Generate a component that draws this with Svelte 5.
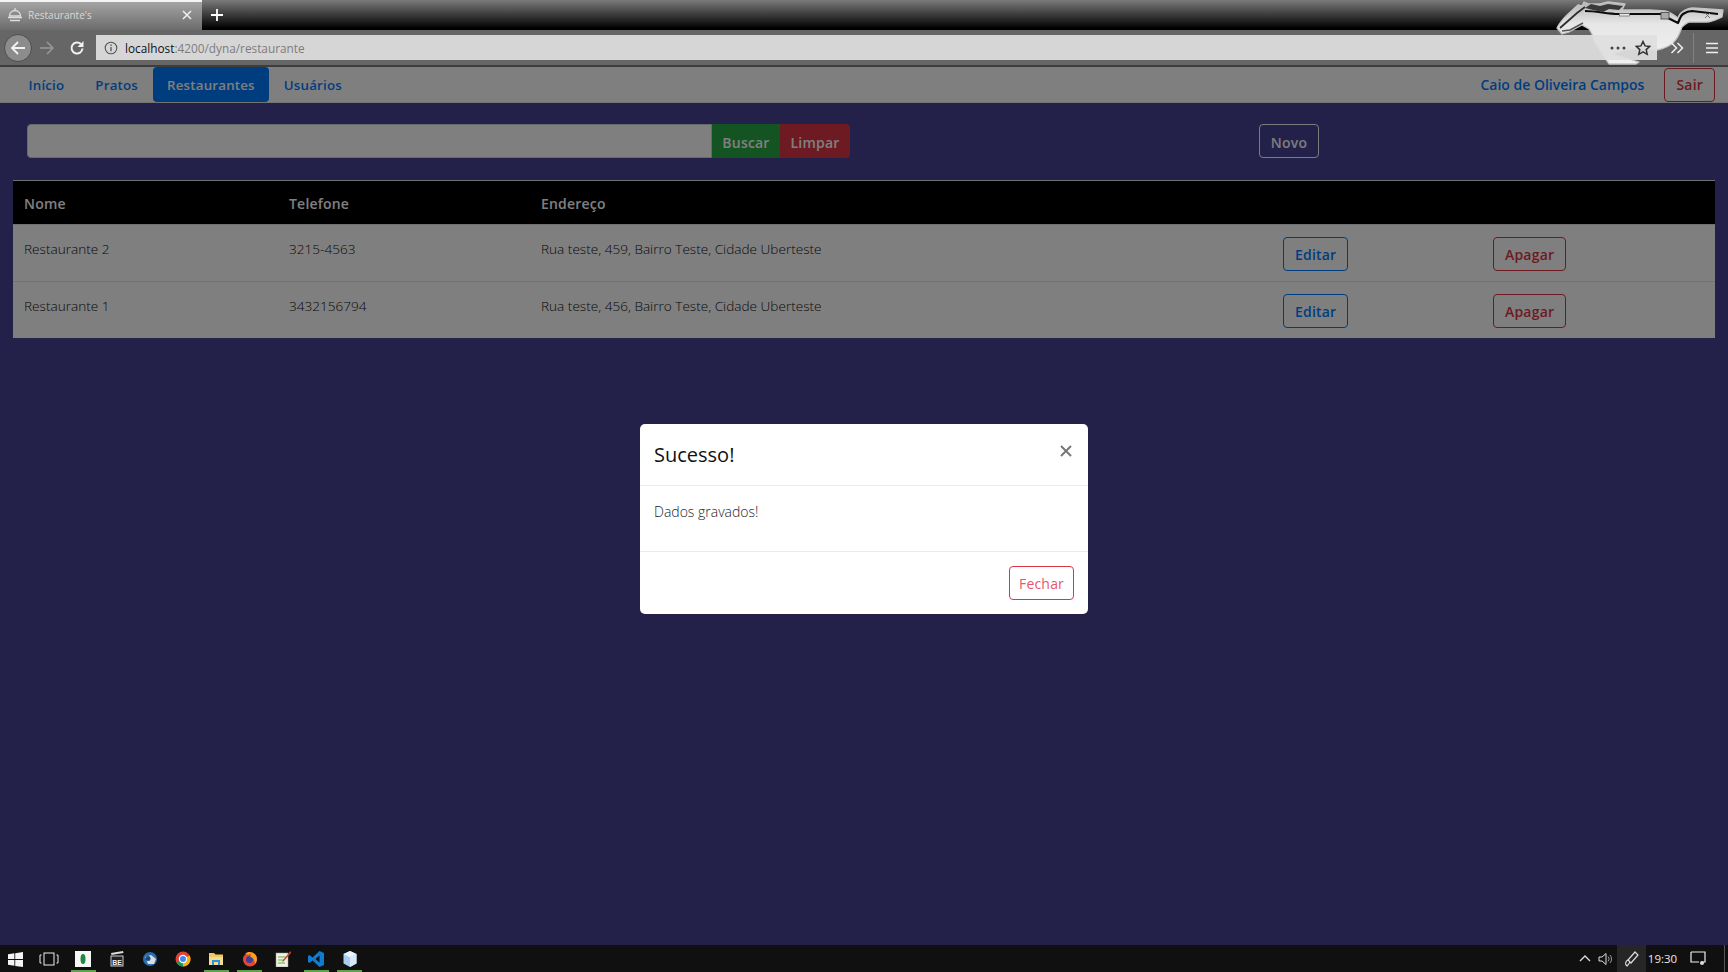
<script>
  const tabs = [
    { label: "Início" },
    { label: "Pratos" },
    { label: "Restaurantes", active: true },
    { label: "Usuários" }
  ];
  const rows = [
    { nome: "Restaurante 2", telefone: "3215-4563", endereco: "Rua teste, 459, Bairro Teste, Cidade Uberteste" },
    { nome: "Restaurante 1", telefone: "3432156794", endereco: "Rua teste, 456, Bairro Teste, Cidade Uberteste" }
  ];
</script>

<div class="screen">
  <div class="tabstrip">
    <div class="tab">
      <svg class="favicon" viewBox="0 0 16 16" width="16" height="16">
        <path d="M8 1v2M2.500 9a5.500 5.500 0 0 1 11 0z" fill="none" stroke="#ddd" stroke-width="1.300" />
        <path d="M1 10.500h14M3 13.500h10" stroke="#ddd" stroke-width="1.500" />
      </svg>
      <span class="tab-title">Restaurante's</span>
      <svg class="tab-close" viewBox="0 0 10 10" width="10" height="10">
        <path d="M1 1l8 8M9 1l-8 8" stroke="#eee" stroke-width="1.600" />
      </svg>
    </div>
    <svg class="new-tab" viewBox="0 0 12 12" width="12" height="12">
      <path d="M6 0v12M0 6h12" stroke="#fff" stroke-width="1.800" />
    </svg>
  </div>

  <div class="toolbar">
    <div class="back">
      <svg viewBox="0 0 16 16" width="16" height="16">
        <path d="M15 8H2M8 2L2 8l6 6" fill="none" stroke="#f2f2f2" stroke-width="1.800" />
      </svg>
    </div>
    <svg class="forward" viewBox="0 0 16 16" width="16" height="16">
      <path d="M1 8h13M8 2l6 6-6 6" fill="none" stroke="#999" stroke-width="1.500" />
    </svg>
    <svg class="reload" viewBox="0 0 16 16" width="16" height="16">
      <path d="M13.500 8.500a5.500 5.500 0 1 1-1.700-4.500" fill="none" stroke="#f2f2f2" stroke-width="2" />
      <path d="M14.500 1v6h-6z" fill="#f2f2f2" />
    </svg>
    <div class="urlbar">
      <svg class="info" viewBox="0 0 14 14" width="14" height="14">
        <circle cx="7" cy="7" r="5.800" fill="none" stroke="#555" stroke-width="1.100" />
        <path d="M7 6v4.200M7 3.600v1.300" stroke="#555" stroke-width="1.300" />
      </svg>
      <span class="host">localhost</span><span class="path">:4200/dyna/restaurante</span>
      <span class="url-actions">
        <svg viewBox="0 0 16 4" width="16" height="4">
          <circle cx="2" cy="2" r="1.500" fill="#444" /><circle cx="8" cy="2" r="1.500" fill="#444" /><circle cx="14" cy="2" r="1.500" fill="#444" />
        </svg>
        <svg viewBox="0 0 16 16" width="16" height="16">
          <path d="M8 1.500l2 4.400 4.800.5-3.600 3.200 1 4.700L8 11.900l-4.200 2.400 1-4.700L1.200 6.400 6 5.900z" fill="none" stroke="#333" stroke-width="1.500" />
        </svg>
      </span>
    </div>
    <svg class="overflow" viewBox="0 0 14 12" width="14" height="12">
      <path d="M1.500 1l5 5-5 5M7.500 1l5 5-5 5" fill="none" stroke="#f0f0f0" stroke-width="1.500" />
    </svg>
    <span class="tool-sep"></span>
    <svg class="burger" viewBox="0 0 12 12" width="12" height="12">
      <path d="M0 1.500h12M0 6h12M0 10.500h12" stroke="#f0f0f0" stroke-width="1.600" />
    </svg>
  </div>

  <!-- tema do firefox, passa por baixo da barra de endereco -->
  <svg class="mustang" viewBox="0 0 178 68" width="178" height="68">
    <defs>
      <linearGradient id="pelo" x1="0" y1="0" x2="0" y2="1">
        <stop offset="0" stop-color="#b4b4b4" />
        <stop offset="0.35" stop-color="#e6e6e6" />
        <stop offset="1" stop-color="#f2f2f2" />
      </linearGradient>
    </defs>
    <path d="M7 28C10 22 14 18 17 15L28 5l4 1 2-4 5 2 11 0 8-2 17 2-3 6 28 0 15 1c5 1 9 4 13 7 1-3 2-5 4-6 3-2 7-4 11-4l30 2-1 7c-5 2-10 5-15 5l-17 0c-3 0-6 3-8 5-2 6-4 11-9 16-5 4-11 6-16 7l-17-2-15 2-13 4 27 8-3 2-27 0-8-12-7-11-2-7-3-5-7-4-13 7-7 2z"
      fill="url(#pelo)" stroke="#c4c4c4" stroke-width="1.300" stroke-linejoin="round" />
    <path d="M35 11c12 0 22 3 34 3h42l5 3 12 6c2-4 2-7 5-9 3-2 7-3 9-3l26 3" fill="none" stroke="#0c0c0c" stroke-width="2.200" stroke-linejoin="round" />
    <path d="M10 28l17-15 8-6" fill="none" stroke="#2e2e2e" stroke-width="1.800" />
    <path d="M35 8l6-4 9 2 8-2 15 2-4 4-10-1-6 3-10-2z" fill="#3a3a3a" />
    <path d="M33 23l-13 7-8 1" fill="none" stroke="#555" stroke-width="1.500" />
    <rect x="69.500" y="13.500" width="10" height="2.500" fill="#e8e8e8" stroke="#666" stroke-width="0.700" />
    <rect x="111" y="12.500" width="8" height="6.500" fill="#aaa" stroke="#444" stroke-width="0.800" />
    <path d="M155 13l5 5M160 13l-5 5" stroke="#777" />
  </svg>

  <main class="page">
    <nav class="navbar">
      {#each tabs as tab}
        <a class="nav-link" class:active={tab.active} href="#top">{tab.label}</a>
      {/each}
      <span class="user">Caio de Oliveira Campos</span>
      <button class="btn outline-danger sair">Sair</button>
    </nav>

    <div class="search-row">
      <div class="search">
        <input type="text" />
        <button class="btn buscar">Buscar</button>
        <button class="btn limpar">Limpar</button>
      </div>
      <button class="btn novo">Novo</button>
    </div>

    <table>
      <thead>
        <tr>
          <th class="col-nome">Nome</th>
          <th class="col-tel">Telefone</th>
          <th class="col-end">Endereço</th>
          <th class="col-edit"></th>
          <th></th>
        </tr>
      </thead>
      <tbody>
        {#each rows as row}
          <tr>
            <td>{row.nome}</td>
            <td>{row.telefone}</td>
            <td>{row.endereco}</td>
            <td><button class="btn outline-primary">Editar</button></td>
            <td><button class="btn outline-danger">Apagar</button></td>
          </tr>
        {/each}
      </tbody>
    </table>

    <div class="backdrop"></div>

    <div class="modal">
      <header>
        <h4>Sucesso!</h4>
        <svg class="close" viewBox="0 0 12 12" width="12" height="12">
          <path d="M1 1l10 10M11 1L1 11" stroke="#777" stroke-width="2" />
        </svg>
      </header>
      <div class="modal-body">Dados gravados!</div>
      <footer>
        <button class="btn fechar">Fechar</button>
      </footer>
    </div>
  </main>

  <div class="taskbar">
    <div class="task first">
      <svg viewBox="0 0 16 16" width="15" height="15">
        <path d="M0 2.300l6.800-1v6.200H0zM7.700 1.200L16 0v7.500H7.700zM0 8.400h6.800v6.300l-6.800-1zM7.700 8.400H16V16l-8.300-1.200z" fill="#f4f4f4" />
      </svg>
    </div>
    <div class="task first">
      <svg viewBox="0 0 20 14" width="20" height="14">
        <rect x="5" y="1" width="10" height="12" fill="none" stroke="#eee" />
        <path d="M2.500 3H1v8h1.500M17.500 3H19v8h-1.500" fill="none" stroke="#eee" />
      </svg>
    </div>
    <div class="task running">
      <svg viewBox="0 0 16 16" width="16" height="16">
        <rect width="16" height="16" fill="#f7f7f7" />
        <ellipse cx="8" cy="8" rx="2.500" ry="5" fill="#1f8a3c" />
      </svg>
    </div>
    <div class="task">
      <svg viewBox="0 0 16 16" width="16" height="16">
        <path d="M2 2l12-2 .5 2-12 2z" fill="#ddd" />
        <rect x="2" y="5" width="12" height="10" fill="#222" stroke="#ccc" />
        <text x="8" y="13.500" class="clap">BE</text>
      </svg>
    </div>
    <div class="task">
      <svg viewBox="0 0 16 16" width="16" height="16">
        <circle cx="8" cy="8" r="7" fill="#2a6eb0" />
        <path d="M3 6l6-2 5 4-2 5-6 0z" fill="#d8dde3" />
        <circle cx="6" cy="7.500" r="2.500" fill="#174a80" />
      </svg>
    </div>
    <div class="task">
      <svg viewBox="0 0 16 16" width="16" height="16">
        <circle cx="8" cy="8" r="7.500" fill="#db4437" />
        <path d="M8 8L1.500 11.800A7.500 7.500 0 0 0 8 15.500z" fill="#0f9d58" />
        <path d="M8 8l6.700-3.400A7.500 7.500 0 0 1 8 15.500z" fill="#f4b400" />
        <circle cx="8" cy="8" r="3.600" fill="#4285f4" stroke="#fff" stroke-width="1.200" />
      </svg>
    </div>
    <div class="task running">
      <svg viewBox="0 0 16 16" width="16" height="16">
        <path d="M1 2h5l1.500 1.500H15V14H1z" fill="#f2c864" />
        <path d="M1 6h14v8H1z" fill="#f7dc90" />
        <path d="M5 14v-4h6v4" fill="none" stroke="#2f8fd8" stroke-width="2" />
      </svg>
    </div>
    <div class="task running">
      <svg viewBox="0 0 16 16" width="16" height="16">
        <circle cx="8" cy="8.500" r="7" fill="#e8472b" />
        <circle cx="7.500" cy="8.500" r="3.500" fill="#3a3f9e" />
        <path d="M3 2.500c3-2.500 9-2.500 11.500 3 1 3 0 6-1.500 7.500 0-4-2-7-5-7 1-1 1-2 .5-3.500-1 1.500-3 1.500-5 0z" fill="#f9a11b" />
      </svg>
    </div>
    <div class="task">
      <svg viewBox="0 0 16 16" width="16" height="16">
        <rect x="1" y="2" width="12" height="14" fill="#f0f0e4" stroke="#999" stroke-width="0.500" />
        <path d="M3 6h8M3 9h6M3 12h7" stroke="#5fae45" />
        <path d="M15.500 0L8 9l-1 2 2-1 7-8z" fill="#c8492c" />
      </svg>
    </div>
    <div class="task running">
      <svg viewBox="0 0 16 16" width="16" height="16">
        <path d="M11.500 0L16 2v12l-4.500 2L4.500 9.500 1.500 12 0 11V5l1.500-1 3 2.500zM11.500 4.500L7.500 8l4 3.500z" fill="#0f7cd0" fill-rule="evenodd" />
      </svg>
    </div>
    <div class="task running">
      <svg viewBox="0 0 16 16" width="16" height="16">
        <path d="M8 0l6.500 3v9.500L8 16l-6.500-3.500V3z" fill="#a9cdf0" />
        <path d="M8 6.500l6.500-3.500v9.500L8 16z" fill="#d6e7f8" />
        <path d="M8 0l6.500 3L8 6.500 1.500 3z" fill="#e9f3fc" />
      </svg>
    </div>

    <div class="tray">
      <svg class="tray-up" viewBox="0 0 12 7" width="12" height="7">
        <path d="M1 6l5-5 5 5" fill="none" stroke="#ddd" stroke-width="1.300" />
      </svg>
      <svg class="tray-sound" viewBox="0 0 16 14" width="16" height="14">
        <path d="M1 5h3l4-3.500v11L4 9H1z" fill="none" stroke="#ddd" />
        <path d="M10 4.500a3.500 3.500 0 0 1 0 5M12 3a6 6 0 0 1 0 8" fill="none" stroke="#999" />
      </svg>
      <div class="tray-pen">
        <svg viewBox="0 0 16 16" width="16" height="16">
          <path d="M11 1l3 3-7 8-3-3z" fill="none" stroke="#ddd" stroke-width="1.200" />
          <path d="M4 9c-3 1-3 5-1 6 1-1 2-2 3-4" fill="none" stroke="#ddd" stroke-width="1.200" />
        </svg>
      </div>
      <span class="clock">19:30</span>
      <svg class="tray-note" viewBox="0 0 16 15" width="16" height="15">
        <path d="M1 1h14v10h-2M1 1v10h8" fill="none" stroke="#eee" stroke-width="1.200" />
        <circle cx="12" cy="12" r="2" fill="#ddd" />
      </svg>
      <span class="show-desktop"></span>
    </div>
  </div>
</div>

<style>
  :global(body) {
    margin: 0;
    background: #232049;
  }
  .screen {
    width: 1728px;
    height: 972px;
    display: flex;
    flex-direction: column;
    position: relative;
    overflow: hidden;
    font-family: "Open Sans", "Noto Sans", sans-serif;
  }

  /* navegador */
  .tabstrip {
    height: 30px;
    display: flex;
    align-items: center;
    background: linear-gradient(#7a7a7a, #000 95%);
  }
  .tab {
    width: 202px;
    height: 30px;
    box-sizing: border-box;
    border-top: 2px solid #f4f4f4;
    padding: 0 10px 3px 7px;
    display: flex;
    align-items: center;
    background: linear-gradient(#a4a4a4, #6c6c6c);
  }
  .favicon {
    margin-right: 5px;
  }
  .tab-title {
    flex: 1;
    font-size: 10px;
    color: #d8d8d8;
  }
  .new-tab {
    margin-left: 9px;
  }
  .toolbar {
    height: 37px;
    box-sizing: border-box;
    border-bottom: 2px solid #3d3d3d;
    background: #666;
    display: flex;
    align-items: center;
    padding-left: 4px;
  }
  .back {
    width: 28px;
    height: 28px;
    box-sizing: border-box;
    border: 1px solid #4e4e4e;
    border-radius: 50%;
    background: #8c8c8c;
    display: flex;
    align-items: center;
    justify-content: center;
  }
  .forward {
    margin-left: 7px;
  }
  .reload {
    margin-left: 14px;
  }
  .urlbar {
    width: 1561px;
    height: 25px;
    margin-left: 11px;
    box-sizing: border-box;
    padding-left: 8px;
    background: rgba(223, 223, 223, 0.93);
    display: flex;
    align-items: center;
    font-size: 11.800px;
    position: relative;
    z-index: 2;
  }
  .info {
    margin-right: 7px;
  }
  .host {
    color: #111;
  }
  .path {
    color: #7d7d7d;
  }
  .url-actions {
    margin-left: auto;
    display: flex;
    align-items: center;
    gap: 9px;
    padding-right: 6px;
  }
  .overflow,
  .burger,
  .tool-sep {
    position: relative;
    z-index: 2;
  }
  .overflow {
    margin-left: 13px;
  }
  .tool-sep {
    width: 1px;
    height: 30px;
    background: #828282;
    margin-left: 9px;
  }
  .burger {
    margin-left: 12px;
  }
  .mustang {
    position: absolute;
    top: 0;
    left: 1550px;
    z-index: 1;
  }

  /* pagina */
  .page {
    flex: 1;
    position: relative;
    background: #474092;
  }
  .navbar {
    height: 36px;
    box-sizing: border-box;
    background: #fff;
    display: flex;
    align-items: center;
    gap: 2px;
    padding: 0 13px 0 14px;
    border-bottom: 1px solid #e8e8e8;
  }
  .nav-link {
    height: 100%;
    display: flex;
    align-items: center;
    padding: 1px 14.500px 0;
    box-sizing: border-box;
    font-size: 13.300px;
    letter-spacing: 0.2px;
    font-weight: 600;
    color: #007bff;
    text-decoration: none;
    border-radius: 4px;
  }
  .nav-link.active {
    margin: 0 -2px 0 -2px;
    background: #007bff;
    color: #fff;
  }
  .user {
    margin-left: auto;
    font-size: 14px;
    font-weight: 600;
    color: #007bff;
    margin-right: 18px;
  }
  .btn {
    height: 34px;
    box-sizing: border-box;
    padding: 0 11px;
    font: 600 14px "Open Sans", "Noto Sans", sans-serif;
    border: 1px solid transparent;
    border-radius: 4px;
    background: transparent;
    letter-spacing: 0.2px;
  }
  .outline-primary {
    color: #007bff;
    border-color: #007bff;
  }
  .outline-danger {
    color: #dc3545;
    border-color: #dc3545;
  }
  .search-row {
    display: flex;
    align-items: center;
    padding: 21px 0 22px 27px;
  }
  .search {
    display: flex;
    width: 823px;
  }
  .search input {
    flex: 1;
    height: 34px;
    box-sizing: border-box;
    border: 1px solid #ced4da;
    border-radius: 4px 0 0 4px;
    background: #fff;
    padding: 0;
  }
  .buscar {
    width: 68px;
    padding: 2px 0 0;
    color: #fff;
    background: #28a745;
    border-radius: 0;
  }
  .limpar {
    width: 70px;
    padding: 2px 0 0;
    color: #fff;
    background: #dc3545;
    border-radius: 0 4px 4px 0;
  }
  .novo {
    margin-left: 409px;
    width: 60px;
    padding: 2px 0 0;
    color: #f8f9fa;
    border-color: #f8f9fa;
  }
  table {
    width: 1702px;
    margin-left: 13px;
    border-collapse: collapse;
    table-layout: fixed;
    font-size: 13.600px;
    color: #111;
  }
  th {
    height: 44px;
    box-sizing: border-box;
    background: #000;
    color: #fff;
    text-align: left;
    font-weight: 600;
    font-size: 14px;
    letter-spacing: 0.2px;
    padding: 2px 11px 0;
    border-top: 1px solid #dee2e6;
  }
  .col-nome {
    width: 265px;
  }
  .col-tel {
    width: 252px;
  }
  .col-end {
    width: 742px;
  }
  .col-edit {
    width: 210px;
  }
  td {
    background: #fff;
    font-weight: 300;
    padding: 13px 11px 10px;
    vertical-align: top;
    border-top: 1px solid #dee2e6;
    line-height: 20px;
  }
  td:nth-child(-n + 3) {
    padding-top: 14px;
  }
  td .btn {
    display: block;
    margin-top: -1px;
  }
  .backdrop {
    position: absolute;
    inset: 0;
    background: rgba(0, 0, 0, 0.5);
  }

  /* modal */
  .modal {
    position: absolute;
    top: 357px;
    left: 640px;
    width: 448px;
    height: 190px;
    display: flex;
    flex-direction: column;
    background: #fff;
    border-radius: 5px;
    color: #212529;
  }
  .modal header {
    height: 62px;
    box-sizing: border-box;
    border-bottom: 1px solid #e9ecef;
    padding: 0 16px 0 14px;
    display: flex;
    justify-content: space-between;
    align-items: flex-start;
  }
  h4 {
    margin: 17px 0 0;
    font-size: 20px;
    line-height: 28px;
    font-weight: 400;
    color: #111;
  }
  .close {
    margin-top: 21px;
  }
  .modal-body {
    height: 66px;
    box-sizing: border-box;
    padding: 16px 14px;
    font-size: 14px;
    font-weight: 300;
    line-height: 20px;
    border-bottom: 1px solid #e9ecef;
  }
  .modal footer {
    flex: 1;
    display: flex;
    justify-content: flex-end;
    align-items: flex-start;
    padding: 14px 14px 0 0;
  }
  .fechar {
    width: 65px;
    padding: 0;
    font-weight: 400;
    color: #e8566a;
    border-color: #dc3545;
  }

  /* barra de tarefas */
  .taskbar {
    height: 27px;
    background: #101010;
    display: flex;
    align-items: center;
  }
  .task {
    width: 33.300px;
    height: 27px;
    box-sizing: border-box;
    display: flex;
    align-items: center;
    justify-content: center;
    padding-top: 1px;
  }
  .task.first {
    padding-right: 1.500px;
  }
  .task.running {
    border-bottom: 2px solid #5da34c;
    padding-top: 3px;
    margin: 0 4px;
    width: 25.300px;
  }
  .clap {
    font: 700 7px "Liberation Sans", sans-serif;
    fill: #eee;
    text-anchor: middle;
  }
  .tray {
    margin-left: auto;
    display: flex;
    align-items: center;
    height: 27px;
  }
  .tray-sound {
    margin-left: 7px;
  }
  .tray-pen {
    width: 29px;
    height: 27px;
    margin-left: 3px;
    background: #262626;
    display: flex;
    align-items: center;
    justify-content: center;
  }
  .clock {
    width: 33px;
    margin-right: 4px;
    text-align: center;
    font-size: 11.500px;
    color: #e8e8e8;
  }
  .tray-note {
    margin-left: 7px;
  }
  .show-desktop {
    width: 1px;
    height: 27px;
    margin-left: 18px;
    margin-right: 3px;
    background: #555;
  }
</style>
